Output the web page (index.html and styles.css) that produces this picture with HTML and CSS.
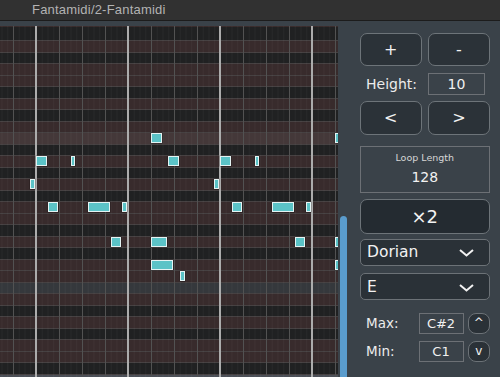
FILE: index.html
```html
<!DOCTYPE html>
<html>
<head>
<meta charset="utf-8">
<link rel="stylesheet" href="styles.css">
</head>
<body>
<div class="app">
  <div class="titlebar"><span class="title">Fantamidi/2-Fantamidi</span></div>
  <div class="main">
    <div class="roll">
      <div class="grid">
        <div class="rows">
          <div class="row dark first"></div>
          <div class="row white"></div>
          <div class="row dark"></div>
          <div class="row white"></div>
          <div class="row white"></div>
          <div class="row dark"></div>
          <div class="row white"></div>
          <div class="row dark"></div>
          <div class="row white"></div>
          <div class="row hl"></div>
          <div class="row dark"></div>
          <div class="row white"></div>
          <div class="row dark"></div>
          <div class="row white"></div>
          <div class="row dark"></div>
          <div class="row white"></div>
          <div class="row white"></div>
          <div class="row dark"></div>
          <div class="row white"></div>
          <div class="row dark"></div>
          <div class="row white"></div>
          <div class="row white"></div>
          <div class="row gray"></div>
          <div class="row white"></div>
          <div class="row dark"></div>
          <div class="row white"></div>
          <div class="row dark"></div>
          <div class="row white"></div>
          <div class="row white"></div>
          <div class="row dark"></div>
          <div class="row edge"></div>
        </div>
        <div class="vlines"></div>
        <div class="note" style="left:151px;top:107px;width:10.5px"></div>
        <div class="note" style="left:335px;top:107px;width:10.5px"></div>
        <div class="note" style="left:36px;top:130px;width:10.5px"></div>
        <div class="note" style="left:70.5px;top:130px;width:4.75px"></div>
        <div class="note" style="left:168.25px;top:130px;width:10.5px"></div>
        <div class="note" style="left:220px;top:130px;width:10.5px"></div>
        <div class="note" style="left:254.5px;top:130px;width:4.75px"></div>
        <div class="note" style="left:30.25px;top:153px;width:4.75px"></div>
        <div class="note" style="left:214.25px;top:153px;width:4.75px"></div>
        <div class="note" style="left:47.5px;top:176px;width:10.5px"></div>
        <div class="note" style="left:87.75px;top:176px;width:22px"></div>
        <div class="note" style="left:122.25px;top:176px;width:4.75px"></div>
        <div class="note" style="left:231.5px;top:176px;width:10.5px"></div>
        <div class="note" style="left:271.75px;top:176px;width:22px"></div>
        <div class="note" style="left:306.25px;top:176px;width:4.75px"></div>
        <div class="note" style="left:110.75px;top:210.5px;width:10.5px"></div>
        <div class="note" style="left:151px;top:210.5px;width:16.25px"></div>
        <div class="note" style="left:294.75px;top:210.5px;width:10.5px"></div>
        <div class="note" style="left:335px;top:210.5px;width:10.5px"></div>
        <div class="note" style="left:151px;top:233.5px;width:22px"></div>
        <div class="note" style="left:335px;top:233.5px;width:10.5px"></div>
        <div class="note" style="left:179.75px;top:245px;width:4.75px"></div>
      </div>
    </div>
    <div class="scroll"><div class="thumb"></div></div>
    <div class="panel">
      <div class="pair top">
        <div class="btn">+</div>
        <div class="btn">-</div>
      </div>
      <div class="pair height-row">
        <div class="label">Height:</div>
        <div class="field height-field">10</div>
      </div>
      <div class="pair arrows">
        <div class="btn">&lt;</div>
        <div class="btn">&gt;</div>
      </div>
      <div class="loop">
        <div class="loop-label">Loop Length</div>
        <div class="loop-value">128</div>
      </div>
      <div class="btn times">×2</div>
      <div class="select dorian">
        <span>Dorian</span>
        <svg class="chev" width="15" height="8" viewBox="0 0 15 8"><polyline points="1,1 7.5,6.5 14,1" fill="none" stroke="#f2f2f2" stroke-width="2"/></svg>
      </div>
      <div class="select key">
        <span>E</span>
        <svg class="chev" width="15" height="8" viewBox="0 0 15 8"><polyline points="1,1 7.5,6.5 14,1" fill="none" stroke="#f2f2f2" stroke-width="2"/></svg>
      </div>
      <div class="range max">
        <div class="label">Max:</div>
        <div class="field small">C#2</div>
        <div class="round">^</div>
      </div>
      <div class="range min">
        <div class="label">Min:</div>
        <div class="field small">C1</div>
        <div class="round">v</div>
      </div>
    </div>
  </div>
</div>
</body>
</html>
```
FILE: styles.css
```css
html, body {
  margin: 0;
  padding: 0;
}
body {
  width: 500px;
  height: 377px;
  overflow: hidden;
  background: #3a4249;
  font-family: "DejaVu Sans", sans-serif;
  color: #eeeeee;
}
.app {
  display: flex;
  flex-direction: column;
  height: 377px;
}
.titlebar {
  height: 21px;
  box-sizing: border-box;
  background: #313131;
  border-bottom: 1px solid #1c1c1c;
  padding-left: 32px;
  display: flex;
  align-items: center;
}
.title {
  font-family: "Liberation Sans", Arial, sans-serif;
  font-size: 13px;
  letter-spacing: 0.2px;
  color: #b3b3b3;
  margin-top: -2px;
}
.main {
  flex: 1;
  display: flex;
  background: #3a4249;
  overflow: hidden;
}
.roll {
  width: 338px;
  flex: none;
  padding-top: 5px;
}
.grid {
  position: relative;
  height: 351px;
  overflow: hidden;
}
.rows {
  display: flex;
  flex-direction: column;
  height: 100%;
}
.row {
  flex: none;
  height: 11.5px;
  box-sizing: border-box;
  border-top: 1px solid #464142;
}
.row.first {
  height: 14px;
  border-top-color: #3a2c2c;
}
.dark { background: #202122; }
.white { background: #382b2c; }
.hl { background: #443839; }
.gray { background: #35383c; }
.edge {
  flex: 1;
  height: auto;
  background: #4c5058;
}
.vlines {
  position: absolute;
  inset: 0;
  background-image:
    linear-gradient(90deg, #acacac 0 2px, transparent 2px),
    linear-gradient(90deg, #525252 0 1px, transparent 1px),
    linear-gradient(90deg, rgba(255,255,255,0.035) 0 1px, transparent 1px);
  background-size: 92px 100%, 23px 100%, 5.75px 100%;
  background-position: 35px 0, 13px 0, 13px 0;
}
.note {
  position: absolute;
  height: 10px;
  box-sizing: border-box;
  background: #5bc3c7;
  border: 1px solid #e4f3f3;
  box-shadow: 0 0 0 0.5px rgba(0,0,0,0.35);
}
.scroll {
  width: 12px;
  flex: none;
  display: flex;
  flex-direction: column;
  padding-top: 195px;
  box-sizing: border-box;
}
.thumb {
  flex: 1;
  width: 7px;
  margin-left: 2px;
  background: #5a9ccd;
  border-radius: 4px 4px 0 0;
}
.panel {
  width: 150px;
  flex: none;
  box-sizing: border-box;
  padding: 11.5px 10px 0 9.5px;
  display: flex;
  flex-direction: column;
}
.pair {
  display: grid;
  grid-template-columns: 1fr 1fr;
  column-gap: 6px;
}
.btn {
  height: 33.5px;
  box-sizing: border-box;
  border: 1px solid #6d7479;
  border-radius: 7px;
  background: #2b3238;
  display: flex;
  align-items: center;
  justify-content: center;
  font-size: 16px;
  color: #f2f2f2;
}
.height-row {
  margin-top: 6.5px;
  height: 22.5px;
  align-items: center;
}
.label {
  font-size: 14px;
  padding-left: 6.5px;
  color: #ececec;
}
.field {
  box-sizing: border-box;
  border: 1px solid #6c7075;
  display: flex;
  align-items: center;
  justify-content: center;
  font-size: 14px;
  color: #f0f0f0;
}
.height-field {
  width: 57.5px;
  height: 22.5px;
}
.arrows {
  margin-top: 6px;
}
.loop {
  margin-top: 11.5px;
  height: 46.5px;
  box-sizing: border-box;
  border: 1px solid #6c7075;
  display: flex;
  flex-direction: column;
  align-items: center;
  padding-top: 5px;
}
.loop-label {
  font-size: 9.5px;
  color: #d6d6d6;
}
.loop-value {
  font-size: 14px;
  margin-top: 6px;
  color: #f2f2f2;
}
.times {
  margin-top: 6px;
  height: 35px;
  background: #242b31;
  font-size: 18px;
}
.select {
  height: 27px;
  box-sizing: border-box;
  border: 1px solid #6c7277;
  border-radius: 5px;
  background: #2a3137;
  display: flex;
  align-items: center;
  justify-content: space-between;
  padding: 0 15px 0 6.5px;
  font-size: 15.5px;
  color: #f2f2f2;
}
.dorian {
  margin-top: 5px;
}
.key {
  margin-top: 7.5px;
}
.chev {
  display: block;
  margin-top: 2px;
}
.range {
  display: flex;
  align-items: center;
  height: 21.5px;
}
.range .label {
  flex: 1;
  font-size: 13.5px;
}
.max {
  margin-top: 12.5px;
}
.min {
  margin-top: 6.5px;
}
.small {
  width: 45px;
  height: 21.5px;
  font-size: 13px;
}
.round {
  width: 22.5px;
  height: 21.5px;
  margin-left: 4px;
  box-sizing: border-box;
  border: 1px solid #6c7277;
  border-radius: 8px;
  background: #2a3137;
  display: flex;
  align-items: center;
  justify-content: center;
  font-size: 12px;
  color: #f2f2f2;
}
```
